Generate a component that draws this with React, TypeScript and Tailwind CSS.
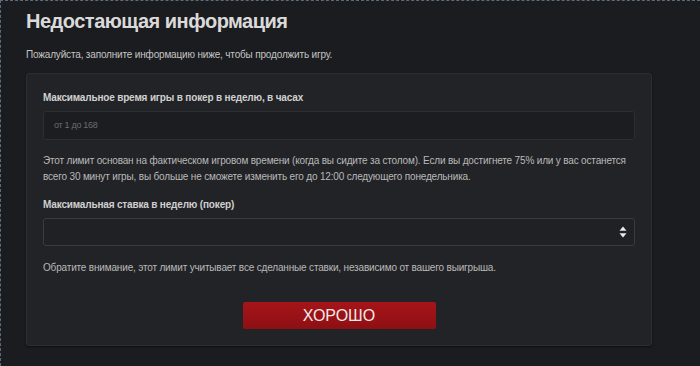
export default function App() {
  return (
    <div
      className="w-[700px] h-[366px] overflow-hidden bg-[#1b1c1f] border-t border-l border-dashed border-[#5d6b7c] pl-[25px]"
      style={{ fontFamily: '"Liberation Sans", Arial, sans-serif' }}
    >
      {/* Heading */}
      <h1 className="mt-[5px] text-[20px] leading-[30px] font-bold tracking-[-0.5px] text-[#dadada]">
        Недостающая информация
      </h1>
      <p className="mt-[12px] text-[10px] leading-[14px] tracking-[-0.17px] text-[#c4c4c4]">
        Пожалуйста, заполните информацию ниже, чтобы продолжить игру.
      </p>

      {/* Card */}
      <div className="mt-[11px] w-[626px] rounded-[3px] border border-[#2d2e32] bg-[#222326] px-[16px] pt-[17px] pb-[16px] shadow-[0_1px_2px_rgba(0,0,0,0.5)] tracking-[-0.17px]">
        <label className="block text-[10px] leading-[14px] font-bold text-[#d0d0d0]">
          Максимальное время игры в покер в неделю, в часах
        </label>
        <div className="mt-[6px] h-[29px] w-[592px] rounded-[3px] border border-[#2d2e32] bg-[#1c1d20] flex items-center px-[10px]">
          <span className="text-[9px] tracking-[-0.3px] text-[#6c6c6c]">от 1 до 168</span>
        </div>
        <p className="mt-[13px] text-[10px] leading-[16px] text-[#b9b9b9] whitespace-nowrap">
          Этот лимит основан на фактическом игровом времени (когда вы сидите за столом). Если вы достигнете 75% или у вас останется
          <br />
          всего 30 минут игры, вы больше не сможете изменить его до 12:00 следующего понедельника.
        </p>

        <label className="mt-[13px] block text-[10px] leading-[14px] font-bold text-[#d0d0d0]">
          Максимальная ставка в неделю (покер)
        </label>
        <div className="mt-[6px] h-[28px] w-[592px] rounded-[3px] border border-[#3a3b3f] bg-[#202124] flex items-center justify-end pr-[7px]">
          <svg width="8" height="12" viewBox="0 0 8 12">
            <path d="M4 0.5 L7.5 4.8 L0.5 4.8 Z" fill="#e8e8e8" />
            <path d="M4 11.5 L7.5 7.2 L0.5 7.2 Z" fill="#e8e8e8" />
          </svg>
        </div>
        <p className="mt-[15px] text-[10px] leading-[14px] text-[#b9b9b9]">
          Обратите внимание, этот лимит учитывает все сделанные ставки, независимо от вашего выигрыша.
        </p>

        <div className="mt-[27px] flex justify-center">
          <button className="h-[27px] w-[193px] rounded-[2px] bg-gradient-to-b from-[#a51519] to-[#8e0f13] text-[16px] leading-[27px] tracking-normal text-[#f3e9e9]">
            ХОРОШО
          </button>
        </div>
      </div>
    </div>
  );
}
